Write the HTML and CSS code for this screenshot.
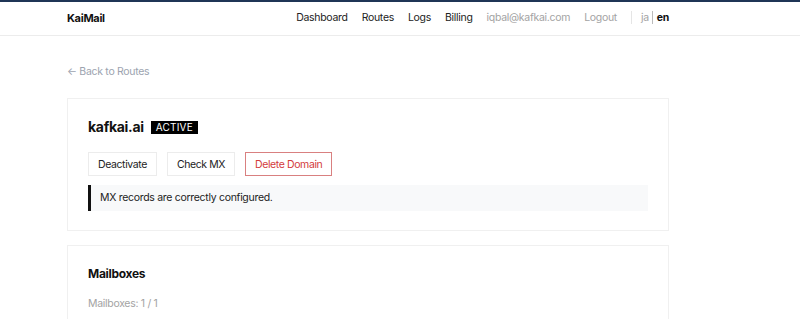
FILE: index.html
```html
<!DOCTYPE html>
<html>
<head>
  <meta charset="UTF-8" />
  <link rel="stylesheet" href="styles.css">
</head>
<body>
  <div class="topbar">
    <div class="wrap nav-row">
      <div class="brand">KaiMail</div>
      <nav class="nav">
        <a class="nav-link">Dashboard</a>
        <a class="nav-link">Routes</a>
        <a class="nav-link">Logs</a>
        <a class="nav-link">Billing</a>
        <span class="nav-muted">iqbal@kafkai.com</span>
        <a class="nav-muted">Logout</a>
        <span class="lang">
          <span class="lang-off">ja</span>
          <span class="lang-on">en</span>
        </span>
      </nav>
    </div>
  </div>

  <div class="wrap main">
    <a class="back">&larr; Back to Routes</a>

    <div class="card">
      <div class="domain-head">
        <h1 class="domain">kafkai.ai</h1>
        <span class="badge">ACTIVE</span>
      </div>
      <div class="actions">
        <button class="btn">Deactivate</button>
        <button class="btn">Check MX</button>
        <button class="btn btn-danger">Delete Domain</button>
      </div>
      <div class="notice">MX records are correctly configured.</div>
    </div>

    <div class="card">
      <h2 class="section-title">Mailboxes</h2>
      <div class="meta">Mailboxes: 1 / 1</div>
    </div>
  </div>
</body>
</html>
```

FILE: styles.css
```css
* { box-sizing: border-box; }
body {
  font-family: Inter, "Noto Sans", sans-serif;
  margin: 0;
  background: #ffffff;
  color: #111;
  font-size: 10.5px;
  letter-spacing: -0.3px;
}
.wrap {
  width: 602px;
  margin-left: 67px;
}
.topbar {
  border-top: 2px solid #1f3556;
  border-bottom: 1px solid #ececec;
}
.nav-row {
  height: 33px;
  padding-bottom: 2px;
  display: flex;
  align-items: center;
  justify-content: space-between;
}
.brand {
  font-size: 11px;
  font-weight: 700;
  color: #111;
}
.nav {
  display: flex;
  align-items: center;
  gap: 14px;
}
.nav-link {
  color: #222;
}
.nav-muted {
  color: #a3a3a3;
}
.lang {
  display: flex;
  align-items: center;
  border-left: 1px solid #e5e5e5;
  padding-left: 9px;
}
.lang-off {
  color: #a3a3a3;
  padding-right: 3px;
  border-right: 1px solid #bbb;
}
.lang-on {
  font-weight: 700;
  color: #111;
  padding-left: 4px;
}
.main {
  padding-top: 29px;
}
.back {
  display: block;
  color: #9ca3af;
  margin-bottom: 20px;
}
.card {
  border: 1px solid #f0f0f0;
  padding: 18px 20px 19px;
  margin-bottom: 14px;
}
.domain-head {
  display: flex;
  align-items: center;
  gap: 7px;
}
.domain {
  margin: 0;
  font-size: 14px;
  font-weight: 700;
  line-height: 20px;
}
.badge {
  background: #000;
  color: #fff;
  font-size: 10px;
  letter-spacing: 0.2px;
  padding: 1px 5px;
  line-height: 11px;
}
.actions {
  display: flex;
  gap: 10px;
  margin-top: 15px;
}
.btn {
  font-family: inherit;
  font-size: 10.5px;
  letter-spacing: -0.4px;
  background: #fff;
  color: #222;
  border: 1px solid #ececec;
  padding: 0 9px;
  height: 24px;
}
.btn-danger {
  color: #d33a3a;
  border-color: #d98080;
}
.notice {
  margin-top: 9px;
  background: #f8f9fa;
  border-left: 3px solid #111;
  padding: 6px 9px;
  line-height: 14px;
  color: #222;
}
.section-title {
  margin: 0;
  padding-top: 2px;
  font-size: 12px;
  font-weight: 700;
  line-height: 16px;
}
.meta {
  color: #a3a3a3;
  margin-top: 15px;
  line-height: 14px;
}
```
